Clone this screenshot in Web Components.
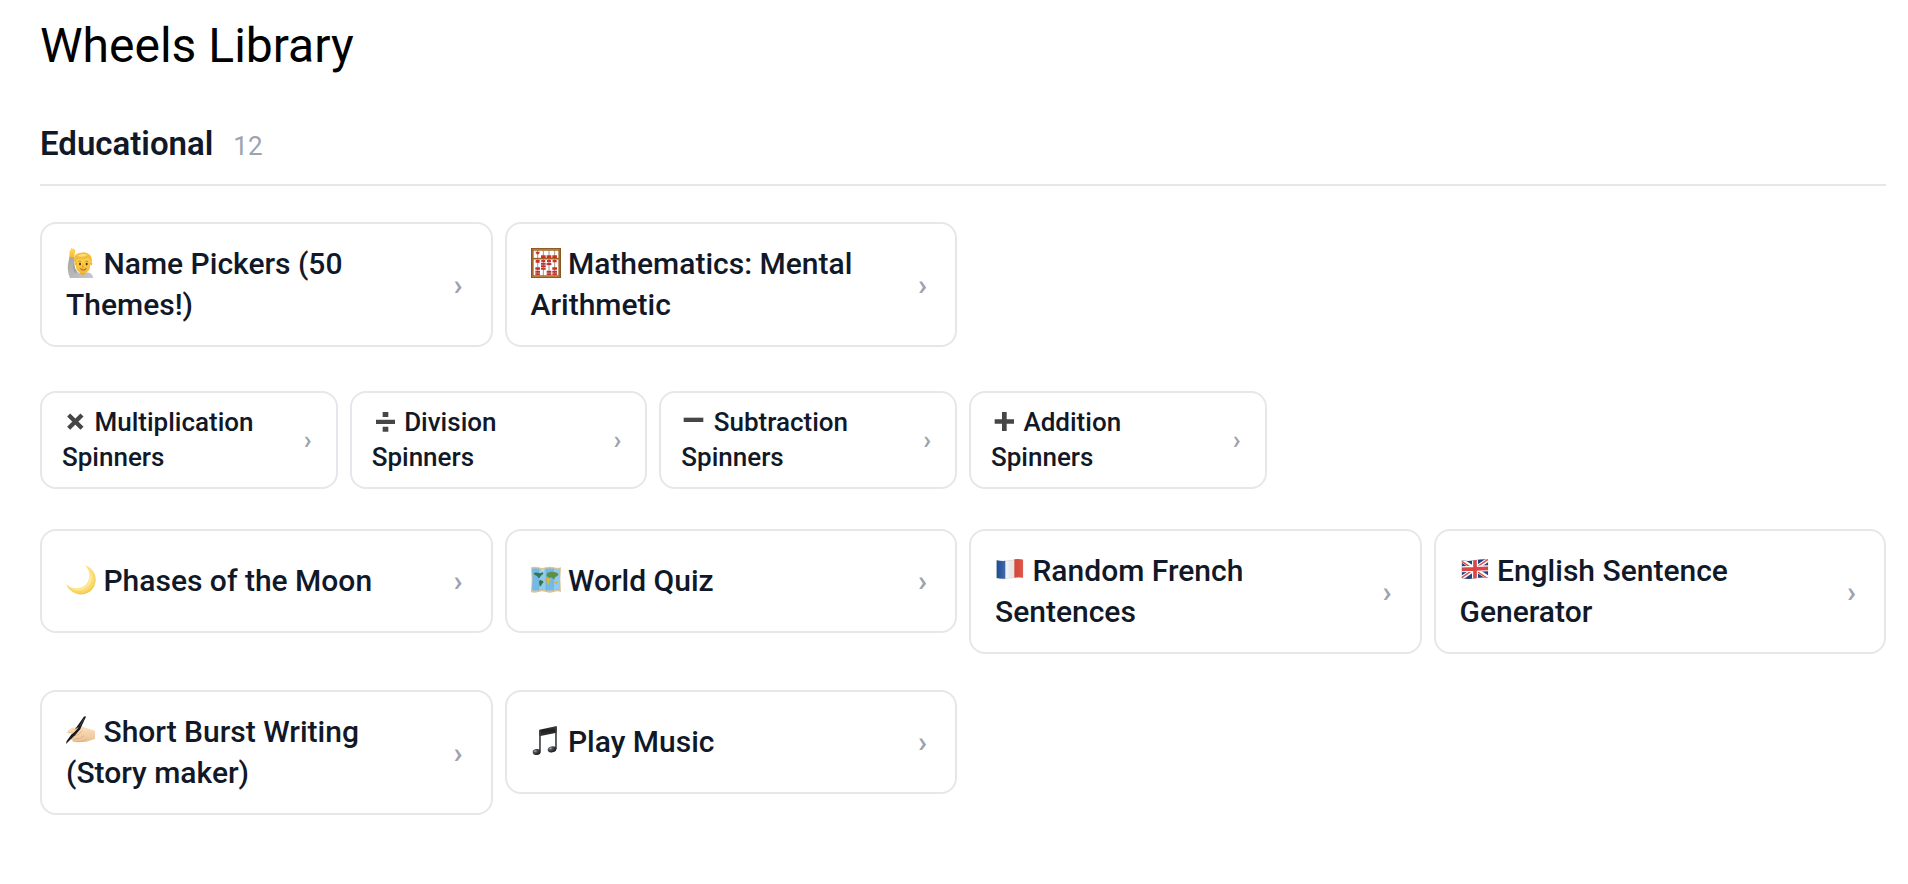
<!DOCTYPE html>
<html lang="en">
<head>
<meta charset="utf-8">
<meta name="viewport" content="width=device-width, initial-scale=1">
<title>Wheels Library</title>
<style>
    body {
        margin: 0;
        background: #fff;
        color: #111827;
        font-family: Roboto, "Liberation Sans", sans-serif;
    }
</style>
</head>
<body>

<wheels-library>
    <span slot="title">Wheels Library</span>
    <wheel-section>
        <span slot="name">Educational</span>
        <span slot="count">12</span>
        <wheel-row>
            <wheel-card icon="person">Name Pickers (50 Themes!)</wheel-card>
            <wheel-card icon="abacus">Mathematics: Mental Arithmetic</wheel-card>
        </wheel-row>
        <wheel-row small>
            <wheel-card small icon="times">Multiplication Spinners</wheel-card>
            <wheel-card small icon="divide">Division Spinners</wheel-card>
            <wheel-card small icon="minus">Subtraction Spinners</wheel-card>
            <wheel-card small icon="plus">Addition Spinners</wheel-card>
        </wheel-row>
        <wheel-row>
            <wheel-card icon="moon">Phases of the Moon</wheel-card>
            <wheel-card icon="map">World Quiz</wheel-card>
            <wheel-card icon="france">Random French Sentences</wheel-card>
            <wheel-card icon="uk">English Sentence Generator</wheel-card>
        </wheel-row>
        <wheel-row>
            <wheel-card icon="writing">Short Burst Writing (Story maker)</wheel-card>
            <wheel-card icon="music">Play Music</wheel-card>
        </wheel-row>
    </wheel-section>
</wheels-library>

<script>
/* big icons are drawn on a 90x90 grid, small ones on 78x78 */
const ICONS = {
    person: `
        <defs>
            <linearGradient id="skin" x1="0" y1="0" x2="0" y2="1"><stop offset="0" stop-color="#ffd95a"/><stop offset="1" stop-color="#f5b92c"/></linearGradient>
            <linearGradient id="shirt" x1="0" y1="0" x2="1" y2="1"><stop offset="0" stop-color="#a5a5a8"/><stop offset="1" stop-color="#c9c9cc"/></linearGradient>
        </defs>
        <path fill="url(#shirt)" d="M10 27q8-5 15 0v22q0 11 7 20l7 6q8 6 17 2l6-4q17 1 20 17H12Q3 70 6 49z"/>
        <path fill="#8e8e92" d="M25 49q0 11 8 20l-4 8q-9-12-8-27z" opacity=".5"/>
        <path fill="url(#skin)" d="M10 28l1-18q0-5 3-3l1-6q3-2 4 1 4-2 5 2 4-1 4 3l-2 12-2 10q-7-4-14-1z"/>
        <path fill="#e9a928" d="M41 67h18v9q-9 10-18 0z"/>
        <path fill="url(#skin)" d="M30 37q0-19 21-19t22 20v13q-2 25-22 25T29 52z"/>
        <circle cx="29" cy="47" r="4" fill="#f2b52b"/><circle cx="75" cy="47" r="4" fill="#f2b52b"/>
        <path fill="#f3bd3c" d="M25 42q-5-25 18-27 16-6 29 6 8 8 5 22l-4-2q-1-9-8-11-8 5-22 3-9 0-12 5l-1 6z"/>
        <path fill="#ffdf70" d="M33 24q14-10 32-3-14 9-32 3"/>
        <ellipse cx="42" cy="48" rx="3" ry="4" fill="#49311c"/><ellipse cx="62" cy="48" rx="3" ry="4" fill="#49311c"/>
        <path d="M37 41q4-3 8-1M58 40q5-2 9 1" fill="none" stroke="#a56b18" stroke-width="2"/>
        <path d="M51 50l-2 7h5" fill="none" stroke="#d58b1d" stroke-width="2"/>
        <path d="M43 62q9 7 18 0-8 11-18 0" fill="#fff" stroke="#a84e1d" stroke-width="2"/>`,
    abacus: `
        <path fill="#fff" d="M3 3h84v84H3z"/>
        <path d="M20 6v78M37 6v78M54 6v78M71 6v78" stroke="#7d5a54" stroke-width="2"/>
        <path d="M13 11h14l-4 8h-6zM30 22h14v7H30zM47 22h14v7H47zM64 22h14v7H64zM14 36h12v8H14zM13 58h14v6H13zM13 68h14v5H13zM13 76h14v5H13zM31 36h12v6H31zM30 44h14v5H30zM30 52h14v5H30zM30 60h14v5H30zM48 36h12v6H48zM47 44h14v6H47zM47 68h14v5H47zM47 76h14v5H47zM65 36h12v7H65zM64 58h14v6H64zM64 68h14v5H64zM64 76h14v5H64z" fill="#cf3328"/>
        <path d="M13 64h14M13 73h14M30 49h14M30 57h14M47 50h14M47 73h14M64 64h14M64 73h14M30 29h14M47 29h14M64 29h14" stroke="#8d1c1c" stroke-width="2"/>
        <path d="M4 32h82" stroke="#9c6427" stroke-width="5"/>
        <path d="M4 4h82v82H4z" fill="none" stroke="#a3682a" stroke-width="8"/>
        <path d="M1 1h88v88H1z" fill="none" stroke="#76481b" stroke-width="2"/>
        <path d="M5 4h80M5 86h80" stroke="#c3924a" stroke-width="2"/>`,
    moon: `
        <defs>
            <radialGradient id="moon" cx=".45" cy=".4" r=".65"><stop offset=".55" stop-color="#ffe792"/><stop offset=".85" stop-color="#f7d35b"/><stop offset="1" stop-color="#dfab36"/></radialGradient>
        </defs>
        <path fill="url(#moon)" d="M57 1C82 9 96 35 86 60 75 88 43 96 20 81 10 75 3 67 1 57q13 13 29 13c25 0 40-18 40-39 0-12-5-22-13-30z"/>
        <path d="M7 63q20 16 43 9 25-11 26-38" fill="none" stroke="#fff2b5" stroke-width="3" opacity=".6"/>`,
    map: `
        <path fill="#d9c59a" d="M0 7q11-4 22 0 12 4 23 0 12-4 23 0 11 3 22 0l-2 35 2 39q-10-4-22 0-12 4-23 0-11-4-23 0-12 4-22 0l2-38z"/>
        <path fill="#72bae9" d="M3 11q10-3 20 0 12 3 22 0 12-3 22 0 10 2 20 0l-2 31 2 33q-10-3-20 0-12 3-22 0-11-3-22 0-10 3-20 0l2-32z"/>
        <path fill="#9bd2f3" d="M23 11q12 3 22 0v64q-11-3-22 0zM67 11q10 2 20 0l-2 31 2 33q-10-3-20 0z" opacity=".7"/>
        <path fill="#397346" d="M8 25q7-5 15-1l7 1 4-4 3 5-8 7-3 6-4-1-4-5-5-2-3-3zM26 44l8 3 4 4-5 6-4 7-3-1-2-11z"/>
        <path fill="#5f8f45" d="M46 29l4-6 8-3 16 2 9 5-4 6-6 3-4 8-5-5-5-2-3 3-8-6z"/>
        <path fill="#d7b83f" d="M44 39l10-1 6 6-5 7-2 8-5-1-2-9-6-4zM70 50l7-3 4 4-4 5-7-1z"/>
        <path fill="#c9d3d8" d="M29 13l11-1-2 8-5 1z"/>
        <path d="M23 8v71M45 7v74M67 8v71" stroke="#487f99" stroke-width="1" opacity=".5"/>`,
    france: `
        <defs><linearGradient id="wave"><stop stop-color="#000" stop-opacity=".12"/><stop offset=".35" stop-color="#fff" stop-opacity=".14"/><stop offset=".7" stop-color="#000" stop-opacity=".05"/><stop offset="1" stop-color="#fff" stop-opacity=".08"/></linearGradient></defs>
        <path fill="#f4f4f4" d="M5 16q19 4 39 0t40-2v54q-19-2-40 2t-39-1z"/>
        <path fill="#2456a4" d="M5 16q13 3 26 1v54q-13 1-26-2z"/>
        <path fill="#df4c3d" d="M58 13q13-2 26 1v54q-13-2-26 0z"/>
        <path fill="url(#wave)" stroke="#777" stroke-opacity=".4" d="M5 16q19 4 39 0t40-2v54q-19-2-40 2t-39-1z"/>`,
    uk: `
        <defs><clipPath id="flag"><path d="M5 16q19 4 39 0t40-3v55q-19-2-40 2t-39-1z"/></clipPath></defs>
        <g clip-path="url(#flag)">
            <path fill="#29407f" d="M5 11h80v62H5z"/>
            <path stroke="#fff" stroke-width="12" d="M2 14l85 56M2 71l85-59"/>
            <path stroke="#d54b49" stroke-width="4" d="M2 17l85 56M2 70l85-59"/>
            <path stroke="#fff" stroke-width="18" d="M45 10v64M3 43l83-3"/>
            <path stroke="#d84646" stroke-width="11" d="M45 10v64M3 43l83-3"/>
        </g>
        <path d="M5 16q19 4 39 0t40-3v55q-19-2-40 2t-39-1z" fill="none" stroke="#665" stroke-opacity=".4"/>`,
    writing: `
        <defs><linearGradient id="hand" x1="0" y1="0" x2="0" y2="1"><stop offset="0" stop-color="#fbe3c1"/><stop offset="1" stop-color="#eac092"/></linearGradient></defs>
        <path fill="url(#hand)" d="M3 48q4-8 15-12l19-5q9-3 15 1l20 8 15 4v25q-9 2-16 5-9 5-25 4H23q-5-3-4-6-6 0-6-5-6-2-1-8l11-11-13 4q-6 2-7-4z"/>
        <path d="M20 61l18-6 11-11M23 70l21-4 10-7M29 77q22 2 34-9M10 51l20-7" fill="none" stroke="#d8a878" stroke-width="2"/>
        <path d="M53 3q4-4 7-1L43 38 25 59 6 78l-6 6 2-9 16-22 16-23z" fill="#161719"/>
        <path fill="#f5d1a5" d="M24 42l13-8 3 3-18 15-5 2q-1-6 7-12z"/>
        <path d="M41 36L22 58" stroke="#191a1c" stroke-width="7"/>
        <path d="M54 8L41 31" stroke="#55585d" stroke-width="2"/>`,
    music: `
        <defs>
            <linearGradient id="beam" x1="0" y1="0" x2="0" y2="1"><stop offset="0" stop-color="#4a4646"/><stop offset=".4" stop-color="#211e20"/><stop offset="1" stop-color="#393638"/></linearGradient>
            <radialGradient id="note" cx=".35" cy=".3" r=".7"><stop offset="0" stop-color="#aab0b7"/><stop offset=".35" stop-color="#4b4f55"/><stop offset="1" stop-color="#17191c"/></radialGradient>
        </defs>
        <path fill="url(#beam)" d="M25 11L77 0v20L25 31z"/>
        <path d="M27 12v64M75 2v67" stroke="#3b3d40" stroke-width="5"/>
        <path d="M28 31v42M76 20v46" stroke="#85888c" stroke-width="1"/>
        <ellipse cx="17" cy="78" rx="12" ry="9" fill="url(#note)" transform="rotate(-12 17 78)"/>
        <ellipse cx="63" cy="70" rx="13" ry="9" fill="url(#note)" transform="rotate(-12 63 70)"/>`,
    times: `<path d="M20 18l40 40M60 18L20 58" stroke="#464646" stroke-width="13"/>`,
    divide: `<path d="M12 32h57v13H12zM32 9h17v15H32zM32 53h17v15H32z" fill="#464646"/>`,
    minus: `<path d="M8 26h59v13H8z" fill="#464646"/>`,
    plus: `<path d="M11 31h22V9h14v22h22v13H47v22H33V44H11z" fill="#464646"/>`
};

function makeTemplate(html) {
    const template = document.createElement('template');
    template.innerHTML = html;
    return template;
}

/* page shell */
class WheelsLibrary extends HTMLElement {
    static template = makeTemplate(`
        <style>
            :host {
                display: block;
                padding: 18px 22px 40px 40px;
            }
            h1 {
                margin: 0 0 49px;
                color: #000;
                font-size: 48px;
                font-weight: 400;
                line-height: 56px;
            }
        </style>
        <main>
            <h1><slot name="title"></slot></h1>
            <slot></slot>
        </main>
    `);
    constructor() {
        super();
        this.attachShadow({ mode: 'open' });
        this.shadowRoot.appendChild(WheelsLibrary.template.content.cloneNode(true));
    }
}

/* category heading and its rows */
class WheelSection extends HTMLElement {
    static template = makeTemplate(`
        <style>
            :host {
                display: block;
            }
            header {
                display: flex;
                align-items: baseline;
                gap: 20px;
                padding-bottom: 20px;
                border-bottom: 2px solid #e5e7eb;
            }
            h2 {
                margin: 0;
                font-size: 33px;
                font-weight: 600;
                line-height: 41px;
            }
            .count {
                color: #9ca3af;
                font-size: 26px;
            }
            .rows {
                display: flex;
                flex-direction: column;
                gap: 36px;
                margin-top: 36px;
            }
        </style>
        <section>
            <header>
                <h2><slot name="name"></slot></h2>
                <span class="count"><slot name="count"></slot></span>
            </header>
            <div class="rows"><slot></slot></div>
        </section>
    `);
    constructor() {
        super();
        this.attachShadow({ mode: 'open' });
        this.shadowRoot.appendChild(WheelSection.template.content.cloneNode(true));
    }
}

/* one line of cards, 4 across or 6 across when small */
class WheelRow extends HTMLElement {
    static template = makeTemplate(`
        <style>
            :host {
                display: grid;
                grid-template-columns: repeat(4, 1fr);
                align-items: start;
                gap: 12px;
            }
            :host([small]) {
                grid-template-columns: repeat(6, 1fr);
                margin: 8px 0 4px;
            }
        </style>
        <slot></slot>
    `);
    constructor() {
        super();
        this.attachShadow({ mode: 'open' });
        this.shadowRoot.appendChild(WheelRow.template.content.cloneNode(true));
    }
}

class WheelCard extends HTMLElement {
    static template = makeTemplate(`
        <style>
            :host {
                display: block;
            }
            a {
                display: flex;
                align-items: center;
                justify-content: space-between;
                gap: 20px;
                box-sizing: border-box;
                min-height: 104px;
                padding: 19px 28px 20px 24px;
                border: 2px solid #e5e7eb;
                border-radius: 16px;
                background: #fff;
                color: #111827;
                font-size: 30px;
                font-weight: 500;
                line-height: 41px;
                text-decoration: none;
            }
            a:hover {
                border-color: #9ca3af;
            }
            svg {
                width: 30px;
                height: 30px;
                vertical-align: -4px;
            }
            .label {
                flex: 1;
            }
            .arrow {
                color: #9ca3af;
                font-weight: 600;
            }
            :host([small]) a {
                min-height: 0;
                padding: 12px 24px 12px 20px;
                font-size: 26px;
                line-height: 35px;
            }
            :host([small]) svg {
                width: 26px;
                height: 26px;
            }
        </style>
        <a href="#">
            <span class="label"><svg aria-hidden="true"></svg> <slot></slot></span>
            <span class="arrow" aria-hidden="true">›</span>
        </a>
    `);
    constructor() {
        super();
        this.attachShadow({ mode: 'open' });
        this.shadowRoot.appendChild(WheelCard.template.content.cloneNode(true));
    }
    connectedCallback() {
        const svg = this.shadowRoot.querySelector('svg');
        const size = this.hasAttribute('small') ? 78 : 90;
        svg.setAttribute('viewBox', `0 0 ${size} ${size}`);
        svg.innerHTML = ICONS[this.getAttribute('icon')];
    }
}

customElements.define('wheels-library', WheelsLibrary);
customElements.define('wheel-section', WheelSection);
customElements.define('wheel-row', WheelRow);
customElements.define('wheel-card', WheelCard);
</script>
</body>
</html>
